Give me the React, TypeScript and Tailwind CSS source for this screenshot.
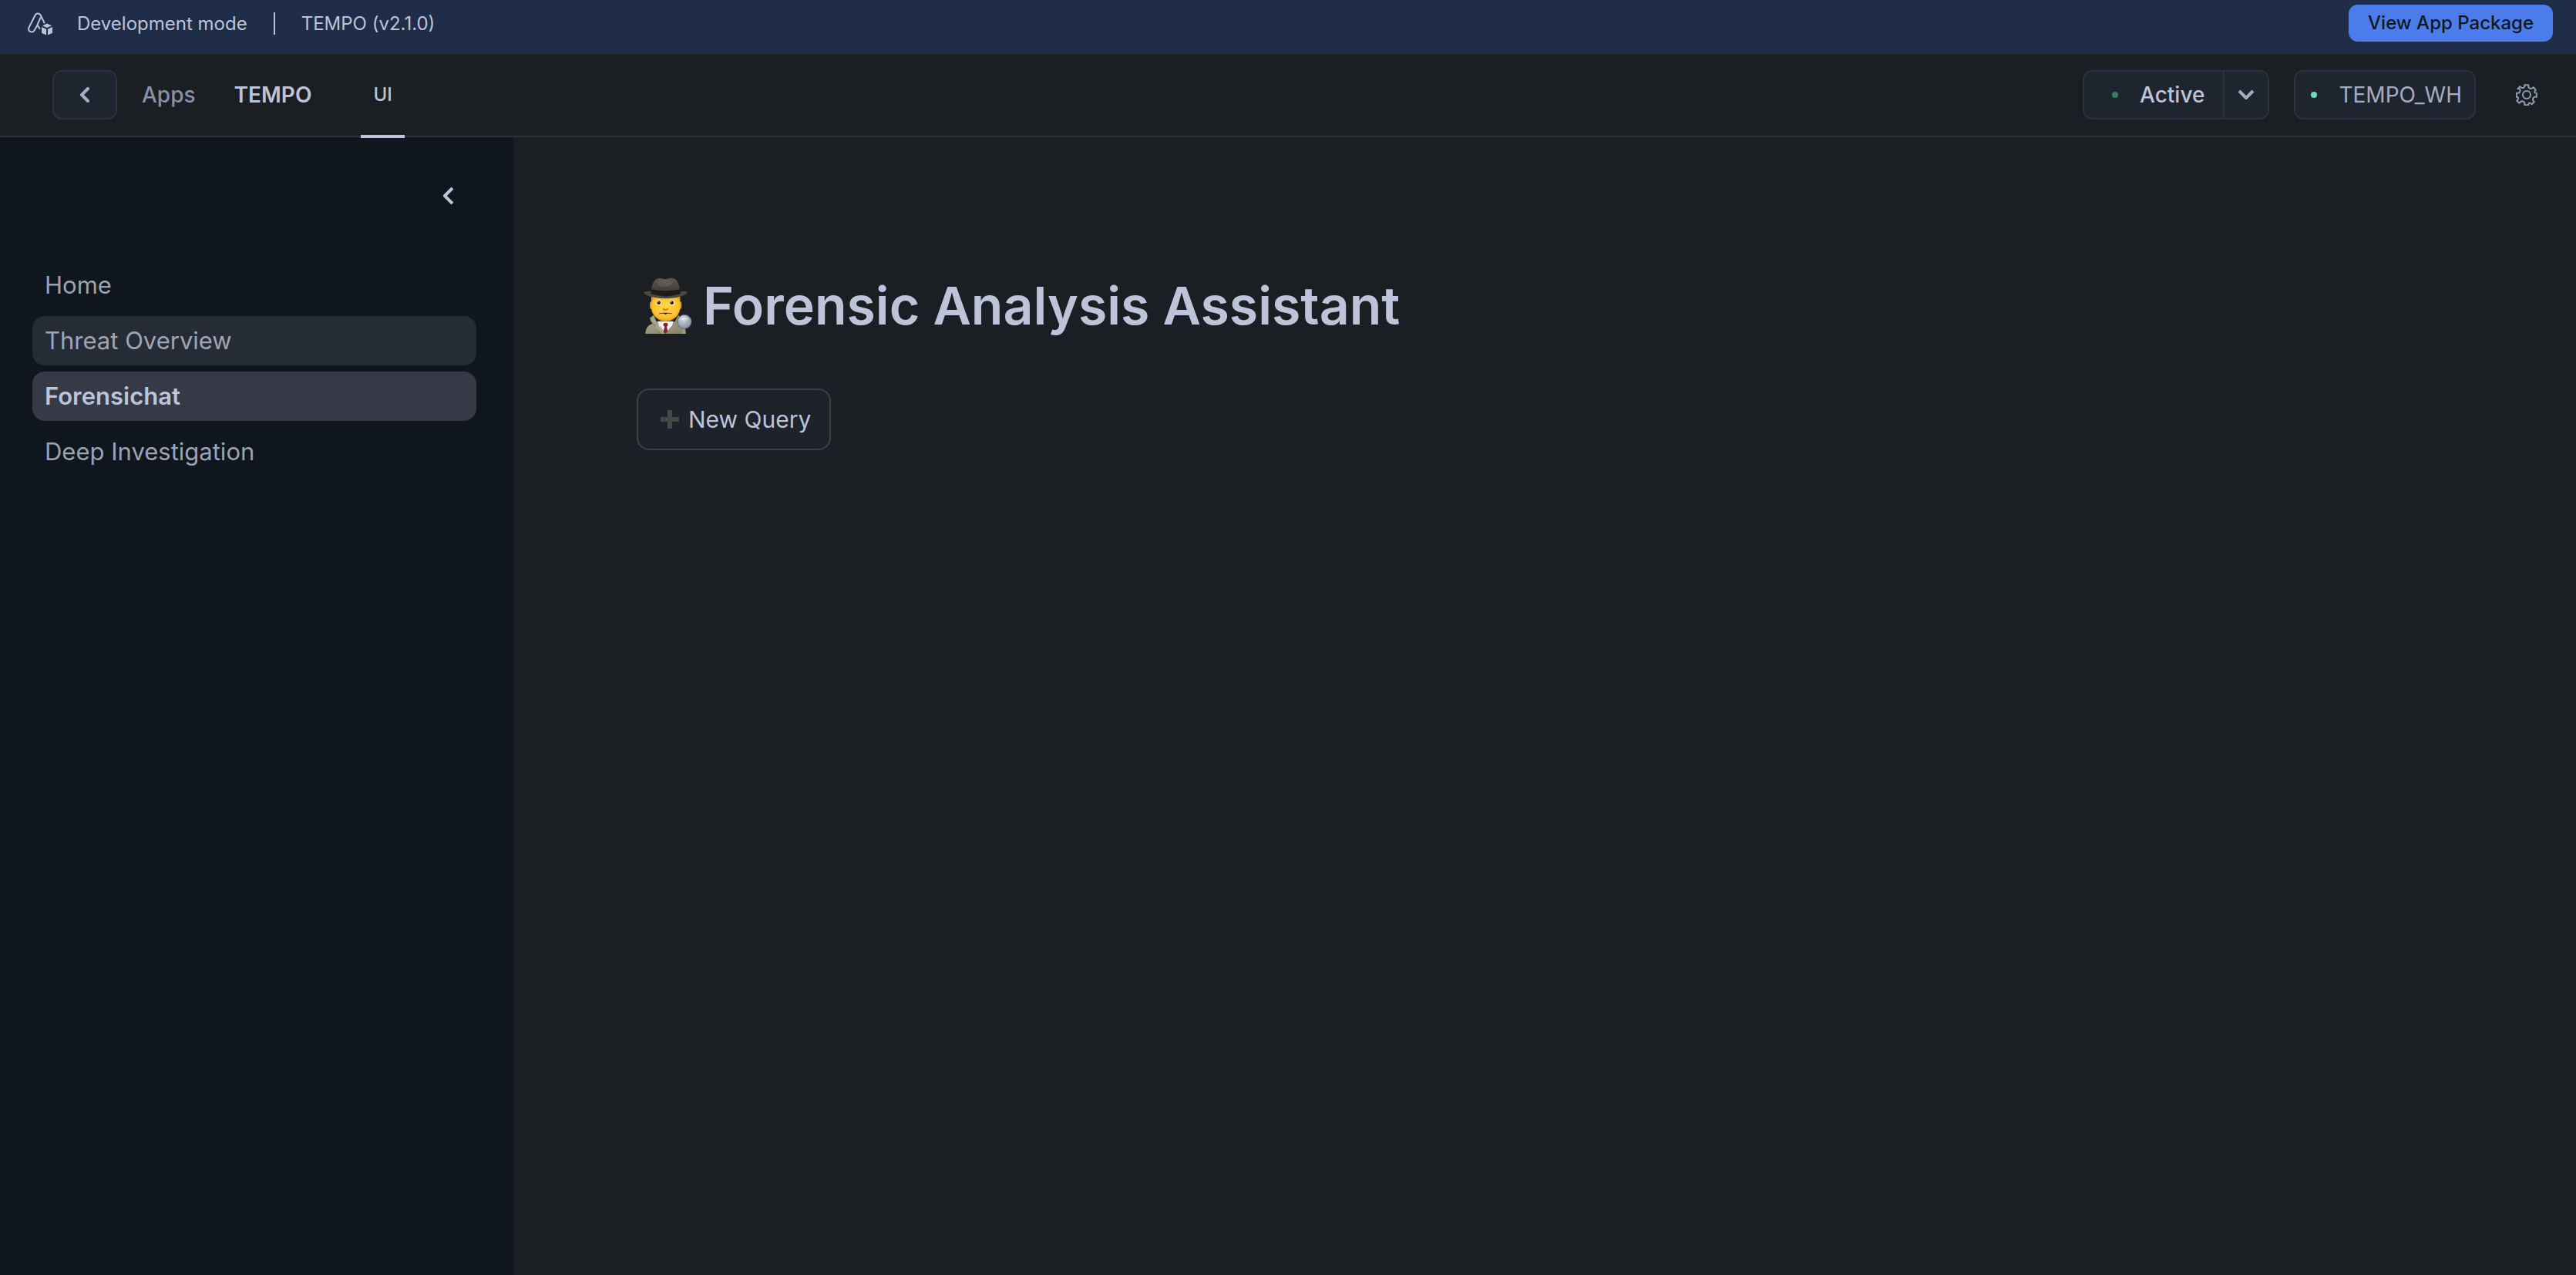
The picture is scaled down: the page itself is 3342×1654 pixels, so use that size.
import React from "react";

const navItems = [
  { label: "Home", state: "idle" },
  { label: "Threat Overview", state: "hover" },
  { label: "Forensichat", state: "active" },
  { label: "Deep Investigation", state: "idle" },
];

const navStyles: Record<string, string> = {
  idle: "text-[#9da2b3]",
  hover: "bg-[#262c36] text-[#a0a5b4]",
  active: "bg-[#353a46] font-semibold text-[#bdc4da]",
};

function PackageLogo() {
  return (
    <svg className="h-[30px] w-8" viewBox="0 0 32 30" fill="none" aria-hidden="true">
      <path
        d="M12 17.500 8.500 23.500C7 26 4 26 2.200 24.300C.8 22.800 .8 20.800 2 18.800L9.500 4C11 .8 15.200 .8 16.800 4L21.500 13.500M16.500 7 11.500 18.500M12.500 16.500 15.500 21"
        stroke="#bdc4da"
        strokeWidth="2"
        strokeLinecap="round"
        strokeLinejoin="round"
      />
      <path d="M25 14.500 31 17.300 25 20 19 17.300Z" fill="#bdc4da" />
      <path d="M18 19 24 21.700V29.500L18 26.700ZM32 19 26 21.700V29.500L32 26.700Z" fill="#bdc4da" />
    </svg>
  );
}

function GearIcon() {
  return (
    <svg className="size-7" viewBox="0 0 28 28" fill="none" stroke="#8f9bb3" strokeWidth="2" strokeLinejoin="round" aria-hidden="true">
      <path d="M11.500 1h5v3q2.500 3 5.500 1l1-1 3 3.500-1.500 2q-.5 2 2.500 2v5h-3q-3 2.500-1 5.500l1 1-3 3-2-1.500q-2.500-1-2.500 2.500h-5v-3q-2.500-3-5.500-1l-1.500 1.500-3-3 1.500-2q1-3-2-3v-5h3q3-2.500 1-5.500L2.500 6l3-3 2 1.500q3.500 1 4-1.500Z" transform="translate(-.2 .2)" />
      <circle cx="14" cy="14" r="5" />
    </svg>
  );
}

function Detective() {
  return (
    <svg className="ml-2 h-[73px] w-16 shrink-0" viewBox="40 30 192 219" role="img" aria-label="Detective">
      <defs>
        <linearGradient id="crown" x1="0" y1="0" x2="0" y2="1">
          <stop offset="0" stopColor="#5c5850" />
          <stop offset="1" stopColor="#34322e" />
        </linearGradient>
        <radialGradient id="skin" cx=".5" cy=".4" r=".65">
          <stop offset="0" stopColor="#ffd84a" />
          <stop offset=".7" stopColor="#fac22c" />
          <stop offset="1" stopColor="#d48a1c" />
        </radialGradient>
        <linearGradient id="coat" x1="0" y1="0" x2="1" y2="1">
          <stop offset="0" stopColor="#a9a286" />
          <stop offset="1" stopColor="#858069" />
        </linearGradient>
        <radialGradient id="lens" cx=".4" cy=".3" r=".8">
          <stop offset="0" stopColor="#d6dfe4" />
          <stop offset=".55" stopColor="#9dabb6" />
          <stop offset="1" stopColor="#7c8994" />
        </radialGradient>
      </defs>
      <path d="M50 249C51 228 58 218 72 212L92 202H164L184 212C200 219 206 230 207 249Z" fill="url(#coat)" />
      <path d="M98 200H158L152 228 128 249 106 228Z" fill="#f0f1f4" />
      <path d="M122 207H135L138 215 133 222 138 242 129 249H127L119 242 125 222 119 215Z" fill="#8d1f2a" />
      <path d="M82 176 66 188 96 220 124 249H106L68 196Z" fill="#8b8469" />
      <path d="M82 176 68 190 78 208 92 214 86 224 116 249H126L98 214Z" fill="#aaa386" />
      <path d="M178 176 192 190 176 216 134 249H128L158 214Z" fill="#9a9379" />
      <path d="M108 220 126 249M152 220 132 249" stroke="#696350" strokeWidth="2" />
      <ellipse cx="73" cy="138" rx="6" ry="15" fill="#e1a028" />
      <ellipse cx="185" cy="138" rx="6" ry="15" fill="#e1a028" />
      <path d="M73 104H185V145C185 180 156 201 129 201S73 180 73 145Z" fill="url(#skin)" />
      <ellipse cx="102" cy="128" rx="10" ry="10" fill="#fff0c0" />
      <ellipse cx="154" cy="128" rx="10" ry="10" fill="#fff0c0" />
      <circle cx="102" cy="128" r="7" fill="#29190d" />
      <circle cx="153" cy="128" r="7" fill="#29190d" />
      <circle cx="100" cy="125" r="2" fill="#fff" />
      <circle cx="151" cy="125" r="2" fill="#fff" />
      <path d="M120 153Q128 158 137 153" stroke="#bd771b" strokeWidth="5" strokeLinecap="round" fill="none" />
      <path d="M104 170Q128 166 152 170" stroke="#7a4617" strokeWidth="3" strokeLinecap="round" fill="none" />
      <path d="M118 169H138Q128 177 118 169Z" fill="#35190b" />
      <path d="M42 87C58 82 67 84 80 84H180C193 84 203 81 215 87C207 100 187 105 170 108Q128 116 88 108C68 104 50 101 42 87Z" fill="#4b4842" />
      <path d="M72 92C74 60 82 34 104 33C116 32 120 36 129 36S144 31 156 33C176 36 183 60 186 92Q128 116 72 92Z" fill="url(#crown)" />
      <path d="M74 76Q128 88 184 76L187 93Q128 112 71 93Z" fill="#1c1b19" />
      <ellipse cx="126" cy="52" rx="28" ry="14" fill="#77736a" opacity=".35" />
      <path d="M196 227H205L207 249H194Z" fill="#a19a7c" />
      <circle cx="202" cy="202" r="27" fill="url(#lens)" stroke="#5d676e" strokeWidth="3" />
      <path d="M184 193Q200 176 218 192Q202 202 184 193Z" fill="#dfe6ea" opacity=".7" />
    </svg>
  );
}

export default function App() {
  return (
    <div className="flex min-h-screen flex-col bg-[#1b1e22] font-['Inter',sans-serif] text-[#bdc4da]">
      <div className="flex h-[70px] items-start justify-between bg-[#202d48] pl-9 pr-[30px] text-2xl">
        <div className="flex h-[61px] items-center">
          <PackageLogo />
          <span className="ml-8">Development mode</span>
          <span className="mx-[34px] h-[29px] w-0.5 bg-[#bdc4da]" />
          <span>TEMPO (v2.1.0)</span>
        </div>
        <button className="mt-1.5 h-12 rounded-xl bg-[#4a7deb] px-[25px] font-medium text-[#10171e]">View App Package</button>
      </div>

      <header className="flex h-[108px] items-center justify-between border-b-2 border-[#2a3142] pl-[68px] pr-[50px] text-[28px]">
        <nav className="flex h-full items-center" aria-label="Breadcrumb">
          <button aria-label="Back" className="flex h-16 w-21 items-center justify-center rounded-xl border-2 border-[#2a3142] bg-[#1f252e]">
            <svg className="h-5 w-3" viewBox="0 0 12 20" fill="none" stroke="#a3adc5" strokeWidth="4" strokeLinecap="round" strokeLinejoin="round" aria-hidden="true">
              <path d="M10 2 2 10l8 8" />
            </svg>
          </button>
          <a href="#apps" className="ml-8 font-medium text-[#8792aa]">Apps</a>
          <a href="#tempo" className="ml-[50px] font-semibold">TEMPO</a>
          <a href="#ui" className="relative ml-16 flex h-full items-center px-4 text-2xl font-medium">
            UI
            <span className="absolute inset-x-0 -bottom-[3px] h-1 bg-[#bdc4da]" />
          </a>
        </nav>
        <div className="flex items-center">
          <div className="flex h-16 overflow-hidden rounded-xl border-2 border-[#2a3142] bg-[#1f252e]">
            <button className="flex items-center pl-9 pr-6 font-medium">
              <span className="mr-7 size-2 rounded-full bg-[#36805f]" />
              Active
            </button>
            <button aria-label="More status actions" className="flex w-[58px] items-center justify-center border-l-2 border-[#2a3142]">
              <svg className="h-[14px] w-[22px]" viewBox="0 0 22 14" fill="none" stroke="#a3adc5" strokeWidth="4" strokeLinejoin="round" aria-hidden="true">
                <path d="m2 2 9 9 9-9" />
              </svg>
            </button>
          </div>
          <button className="ml-8 flex h-16 items-center rounded-xl border-2 border-[#2a3142] bg-[#1f252e] pl-5 pr-4 text-[#a3adc5]">
            <span className="mr-7 size-2 rounded-full bg-[#72dab2]" />
            TEMPO_WH
          </button>
          <button aria-label="Settings" className="ml-[52px]">
            <GearIcon />
          </button>
        </div>
      </header>

      <div className="flex grow">
        <aside className="w-[666px] shrink-0 bg-[#0f161d] pl-[42px] pr-12 pt-16">
          <div className="flex justify-end pr-[29px]">
            <button aria-label="Collapse sidebar" className="h-6">
              <svg className="h-6 w-4" viewBox="0 0 16 24" fill="none" stroke="#bdc4da" strokeWidth="4" strokeLinejoin="round" aria-hidden="true">
                <path d="M14 2 4 12l10 10" />
              </svg>
            </button>
          </div>
          <nav className="mt-18 flex flex-col gap-2 text-[31px]" aria-label="Pages">
            {navItems.map((item) => (
              <a key={item.label} href="#page" className={`flex h-16 items-center rounded-2xl px-4 ${navStyles[item.state]}`}>
                {item.label}
              </a>
            ))}
          </nav>
        </aside>
        <main className="grow px-40 pt-[170px]">
          <h1 className="flex items-center gap-[14px] text-[68px]/[96px] font-semibold">
            <Detective />
            Forensic Analysis Assistant
          </h1>
          <button className="mt-15 flex h-20 items-center rounded-2xl border-2 border-[#3c414b] bg-[#1e222b] pl-[29px] pr-6 text-[30px]">
            <svg className="mr-3 size-6" viewBox="0 0 24 24" fill="#474747" aria-hidden="true">
              <path d="M9 0h6v9h9v6h-9v9H9v-9H0V9h9z" />
            </svg>
            New Query
          </button>
        </main>
      </div>
    </div>
  );
}
